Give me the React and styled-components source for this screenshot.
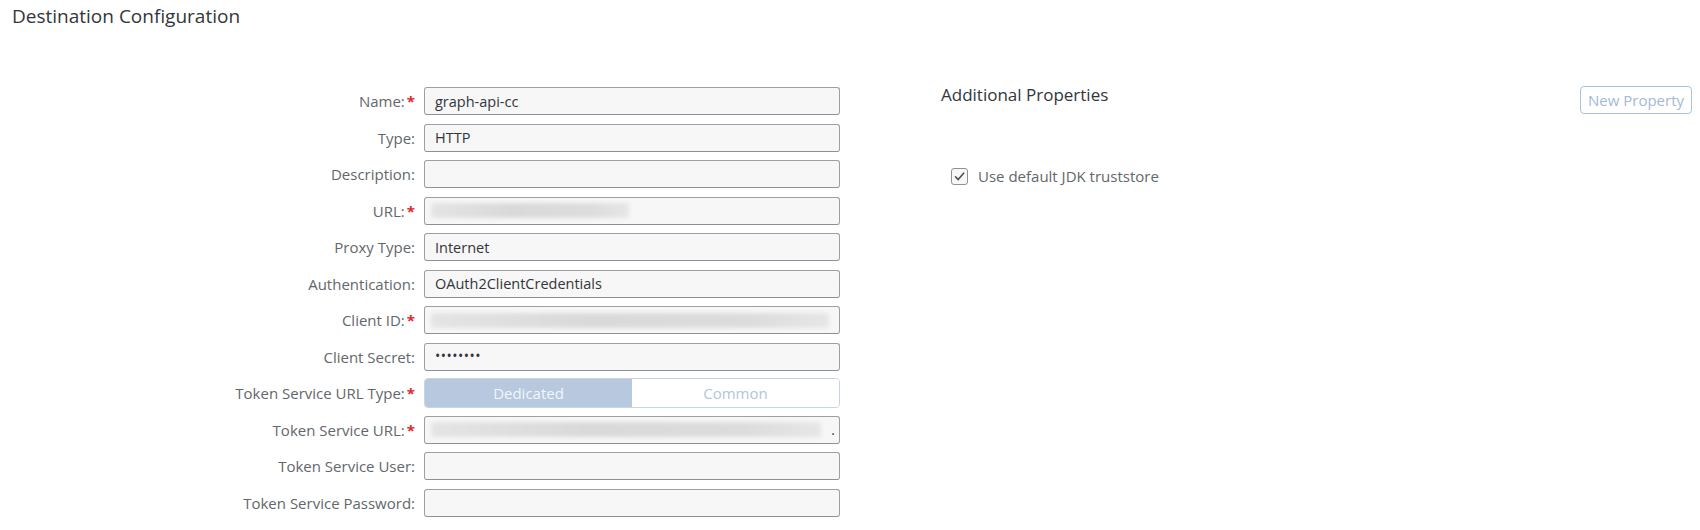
import React from "react";
import styled, { createGlobalStyle } from "styled-components";

const GlobalStyle = createGlobalStyle`
  html, body {
    margin: 0;
    padding: 0;
    background: #ffffff;
  }
  body {
    font-family: "Open Sans", "Liberation Sans", Arial, sans-serif;
    color: #32363a;
  }
`;

const Page = styled.div`
  width: 1700px;
  height: 530px;
  box-sizing: border-box;
  padding: 0 8px 0 12px;
  overflow: hidden;
`;

const Title = styled.h1`
  margin: 0;
  font-size: 19px;
  font-weight: 400;
  line-height: 32px;
  color: #32363a;
`;

const Content = styled.div`
  display: flex;
  align-items: flex-start;
  margin-top: 54px;
`;

const Form = styled.div`
  display: grid;
  grid-template-columns: 403px 416px;
  grid-auto-rows: 28px;
  column-gap: 9px;
  row-gap: 8.5px;
  margin-top: 1px;
`;

const Label = styled.label`
  display: flex;
  align-items: center;
  justify-content: flex-end;
  font-size: 15px;
  color: #63676b;
  white-space: nowrap;
`;

const Star = styled.span`
  color: #e5242b;
  font-weight: 700;
  margin-left: 2px;
  font-size: 15px;
`;

const Field = styled.div`
  display: flex;
  align-items: center;
  box-sizing: border-box;
  height: 28px;
  padding: 0 10px;
  background: #f7f7f7;
  border: 1px solid #9aa0a6;
  border-bottom-color: #8a9096;
  border-radius: 3px;
  font-size: 14.5px;
  color: #32363a;
`;

const Masked = styled.span`
  font-size: 14px;
  letter-spacing: 0.5px;
  transform: translateY(-1px);
`;

const Blur = styled.span`
  display: inline-block;
  height: 15px;
  margin-left: -4px;
  background: linear-gradient(90deg, #e4e4e4, #d9d9d9 40%, #dcdcdc 80%, #e6e6e6);
  filter: blur(2px);
  border-radius: 2px;
`;

const Dot = styled.span`
  margin-left: auto;
  margin-right: -6px;
  font-size: 14px;
  color: #32363a;
`;

const Segmented = styled.div`
  display: flex;
  height: 30px;
  margin-top: -1px;
  border: 1px solid #c6d4e8;
  border-radius: 4px;
  overflow: hidden;
  box-sizing: border-box;
`;

const Segment = styled.div`
  flex: 1;
  display: flex;
  align-items: center;
  justify-content: center;
  font-size: 15px;
  background: ${(p) => (p.$active ? "#b7c8df" : "#ffffff")};
  color: ${(p) => (p.$active ? "#f3f6fa" : "#b3c5dd")};
`;

const Side = styled.div`
  flex: 1;
  margin-left: 101px;
  display: flex;
  flex-direction: column;
`;

const SideHeader = styled.div`
  display: flex;
  align-items: flex-start;
  justify-content: space-between;
`;

const SideTitle = styled.div`
  font-size: 17px;
  line-height: 14px;
  margin-top: 2px;
  color: #32363a;
`;

const GhostButton = styled.button`
  height: 28px;
  box-sizing: border-box;
  padding: 0 7px;
  background: #ffffff;
  border: 1px solid #a9c1e1;
  border-radius: 4px;
  font-family: inherit;
  font-size: 15px;
  color: #a3b9d8;
`;

const CheckRow = styled.div`
  display: flex;
  align-items: center;
  gap: 10px;
  margin-top: 52px;
  margin-left: 10px;
  font-size: 15px;
  color: #63676b;
`;

const Box = styled.span`
  display: inline-flex;
  align-items: center;
  justify-content: center;
  width: 17px;
  height: 17px;
  box-sizing: border-box;
  border: 1px solid #8d9296;
  border-radius: 3px;
  background: #f7f7f7;
`;

const fields = [
  { label: "Name:", required: true, value: "graph-api-cc" },
  { label: "Type:", value: "HTTP" },
  { label: "Description:", value: "" },
  { label: "URL:", required: true, blur: 198 },
  { label: "Proxy Type:", value: "Internet" },
  { label: "Authentication:", value: "OAuth2ClientCredentials" },
  { label: "Client ID:", required: true, blur: 398 },
  { label: "Client Secret:", masked: true },
  { label: "Token Service URL Type:", required: true, segmented: true },
  { label: "Token Service URL:", required: true, blur: 390, dot: true },
  { label: "Token Service User:", value: "" },
  { label: "Token Service Password:", value: "" },
];

function FieldControl({ f }) {
  if (f.segmented) {
    return (
      <Segmented>
        <Segment $active>Dedicated</Segment>
        <Segment>Common</Segment>
      </Segmented>
    );
  }
  if (f.masked) {
    return (
      <Field>
        <Masked>••••••••</Masked>
      </Field>
    );
  }
  if (f.blur) {
    return (
      <Field>
        <Blur style={{ width: f.blur }} />
        {f.dot && <Dot>.</Dot>}
      </Field>
    );
  }
  return <Field>{f.value}</Field>;
}

export default function App() {
  return (
    <>
      <GlobalStyle />
      <Page>
        <Title>Destination Configuration</Title>
        <Content>
          <Form>
            {fields.map((f) => (
              <React.Fragment key={f.label}>
                <Label>
                  {f.label}
                  {f.required && <Star>*</Star>}
                </Label>
                <FieldControl f={f} />
              </React.Fragment>
            ))}
          </Form>
          <Side>
            <SideHeader>
              <SideTitle>Additional Properties</SideTitle>
              <GhostButton>New Property</GhostButton>
            </SideHeader>
            <CheckRow>
              <Box>
                <svg width="13" height="13" viewBox="0 0 13 13">
                  <path
                    d="M2.5 6.8 L5.2 9.6 L10.6 3.2"
                    fill="none"
                    stroke="#4b4f53"
                    strokeWidth="1.6"
                    strokeLinecap="round"
                    strokeLinejoin="round"
                  />
                </svg>
              </Box>
              Use default JDK truststore
            </CheckRow>
          </Side>
        </Content>
      </Page>
    </>
  );
}
